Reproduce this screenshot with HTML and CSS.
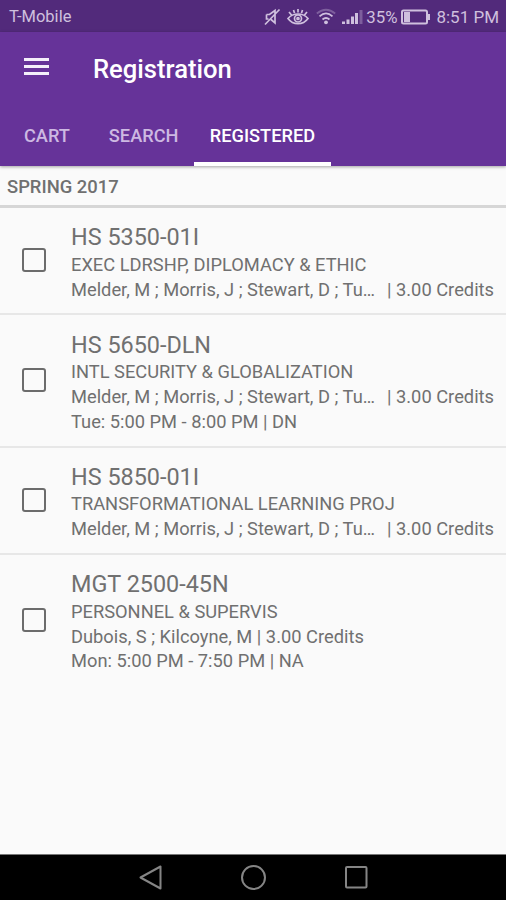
FILE: index.html
```
<!DOCTYPE html>
<html lang="en">
<head>
    <meta charset="UTF-8">
    <meta name="viewport" content="width=device-width, initial-scale=1.0">
    <title>Registration</title>
    <link rel="stylesheet" href="styles.css">
</head>
<body>
    <div class="status-bar">
        <span class="carrier">T-Mobile</span>
        <svg class="icon-mute" width="18" height="18" viewBox="0 0 18 18">
            <path d="M3.500 6.500h3L12 2.500v12.500L8 11.500M3.500 6.500v4.500h2M2 16.500L16.500 1.500"/>
        </svg>
        <svg class="icon-eye" width="22" height="18" viewBox="0 0 22 18">
            <path d="M1 10.500C6 4.500 16 4.500 21 10.500C16 17.500 6 17.500 1 10.500z M2 4l2.500 3M6.500 2l1 3M11 1v3.500M15.500 2l-1 3M20 4l-2.500 3"/>
            <circle cx="11" cy="10.500" r="3.500"/>
            <circle cx="11" cy="10.500" r="1"/>
        </svg>
        <svg class="icon-wifi" width="20" height="17" viewBox="0 0 20 17">
            <path class="faint" d="M0.800 5.500Q10-2 19.200 5.500"/>
            <path d="M3.500 8.300Q10 2.500 16.500 8.300M6.500 11.500Q10 8.500 13.500 11.500"/>
            <circle class="dot" cx="10" cy="14.300" r="1.900"/>
        </svg>
        <svg class="icon-signal" width="21" height="16" viewBox="0 0 21 16">
            <path d="M0 12.500h3V15H0zM4.500 10.500h3V15h-3zM9 7.500h3V15H9zM13 4h3v11h-3z"/>
            <path class="faint" d="M17.500 1H20.500v14h-3z"/>
        </svg>
        <span class="percent">35%</span>
        <svg class="icon-battery" width="30" height="16" viewBox="0 0 30 16">
            <rect x="1" y="1.500" width="25" height="13" rx="1.500"/>
            <path class="level" d="M3 3h6v10H3z"/>
            <path class="level" d="M27 5h2v6h-2z"/>
        </svg>
        <span class="time">8:51 PM</span>
    </div>
    <header class="app-bar">
        <div class="toolbar">
            <div class="menu"><span></span><span></span><span></span></div>
            <h1>Registration</h1>
        </div>
        <nav class="tabs">
            <a class="tab cart">CART</a>
            <a class="tab search">SEARCH</a>
            <a class="tab active">REGISTERED</a>
        </nav>
    </header>
    <h2 class="term">SPRING 2017</h2>
    <main class="courses">
        <div class="course">
            <span class="checkbox"></span>
            <div class="info">
                <h3>HS 5350-01I</h3>
                <p>EXEC LDRSHP, DIPLOMACY &amp; ETHIC</p>
                <p class="split"><span class="names">Melder, M ; Morris, J ; Stewart, D ; Tu…</span><span class="credits">| 3.00 Credits</span></p>
            </div>
        </div>
        <div class="course">
            <span class="checkbox"></span>
            <div class="info">
                <h3>HS 5650-DLN</h3>
                <p>INTL SECURITY &amp; GLOBALIZATION</p>
                <p class="split"><span class="names">Melder, M ; Morris, J ; Stewart, D ; Tu…</span><span class="credits">| 3.00 Credits</span></p>
                <p>Tue: 5:00 PM - 8:00 PM | DN</p>
            </div>
        </div>
        <div class="course">
            <span class="checkbox"></span>
            <div class="info">
                <h3>HS 5850-01I</h3>
                <p>TRANSFORMATIONAL LEARNING PROJ</p>
                <p class="split"><span class="names">Melder, M ; Morris, J ; Stewart, D ; Tu…</span><span class="credits">| 3.00 Credits</span></p>
            </div>
        </div>
        <div class="course">
            <span class="checkbox"></span>
            <div class="info">
                <h3>MGT 2500-45N</h3>
                <p>PERSONNEL &amp; SUPERVIS</p>
                <p>Dubois, S ; Kilcoyne, M | 3.00 Credits</p>
                <p>Mon: 5:00 PM - 7:50 PM | NA</p>
            </div>
        </div>
    </main>
    <footer class="nav-bar">
        <svg width="26" height="28" viewBox="0 0 26 28">
            <path d="M23.500 2.500v22L3.500 13.500z"/>
        </svg>
        <svg width="26" height="28" viewBox="0 0 26 28">
            <circle cx="13.500" cy="13.500" r="11.500"/>
        </svg>
        <svg width="26" height="28" viewBox="0 0 26 28">
            <rect x="3" y="3" width="20.500" height="20.500" rx="1"/>
        </svg>
    </footer>
</body>
</html>
```
FILE: styles.css
```
* {
    margin: 0;
    padding: 0;
    box-sizing: border-box;
}
body {
    height: 900px;
    display: flex;
    flex-direction: column;
    background: #fafafa;
    color: #707070;
    font-family: Roboto, sans-serif;
    overflow: hidden;
}
.status-bar {
    height: 32px;
    display: flex;
    align-items: center;
    padding: 1px 8px 0 9px;
    background: #522a7b;
    color: #cfc0de;
    font-size: 16.5px;
}
.carrier {
    margin-right: auto;
}
.status-bar svg {
    fill: none;
    stroke: #cfc0de;
    stroke-width: 1.7;
}
.status-bar .icon-signal,
.status-bar .dot,
.status-bar .level {
    fill: #cfc0de;
    stroke: none;
}
.status-bar .faint {
    opacity: 0.35;
}
.icon-mute {
    margin-right: 6px;
}
.icon-eye {
    margin-right: 7px;
}
.icon-wifi {
    margin-right: 6px;
}
.icon-signal {
    margin-right: 3px;
}
.percent {
    margin-right: 4px;
    font-size: 16.8px;
}
.status-bar .icon-battery {
    margin-right: 5px;
    stroke-width: 2;
}
.time {
    margin-right: -1px;
    font-size: 17px;
}
.app-bar {
    height: 134px;
    background: #663399;
    color: white;
    position: relative;
    box-shadow: 0 1px 3px rgba(0, 0, 0, 0.35);
}
.toolbar {
    height: 74px;
    display: flex;
    align-items: center;
    padding-left: 24px;
}
.menu {
    width: 25px;
    display: flex;
    flex-direction: column;
    gap: 4px;
    margin: -5px 44px 0 0;
}
.menu span {
    height: 3px;
    background: #f4effa;
}
h1 {
    font-size: 25.6px;
    font-weight: 500;
}
.tabs {
    height: 60px;
    display: flex;
    line-height: 59px;
    font-size: 18.2px;
    font-weight: 500;
}
.tab {
    color: #cdb9e2;
}
.cart {
    padding: 0 24px;
}
.search {
    padding: 0 15px;
}
.tab.active {
    width: 137px;
    margin-left: 0.5px;
    color: white;
    border-bottom: 4px solid white;
    text-align: center;
}
.term {
    height: 42px;
    padding-left: 7px;
    line-height: 42px;
    font-size: 18.4px;
    font-weight: 500;
    border-bottom: 3px solid #d6d6d6;
}
.courses {
    flex: 1;
}
.course {
    display: flex;
    align-items: center;
    padding: 14.2px 12px 10.9px 22px;
    border-bottom: 2px solid #e7e7e7;
}
.course:last-child {
    border-bottom: none;
}
.checkbox {
    width: 24px;
    height: 24px;
    margin: -4px 25px 0 0;
    border: 2px solid #6c6c6c;
    border-radius: 3px;
}
.info {
    flex: 1;
}
h3 {
    line-height: 30.7px;
    font-size: 23.4px;
    font-weight: 400;
}
p {
    line-height: 24.8px;
    font-size: 18.3px;
    white-space: nowrap;
}
.split {
    display: flex;
    justify-content: space-between;
}
.nav-bar {
    height: 46px;
    display: flex;
    align-items: center;
    justify-content: center;
    gap: 77px;
    background: black;
    border-top: 1px solid #777;
}
.nav-bar svg {
    fill: none;
    stroke: #858585;
    stroke-width: 2;
    stroke-linejoin: round;
}
```
